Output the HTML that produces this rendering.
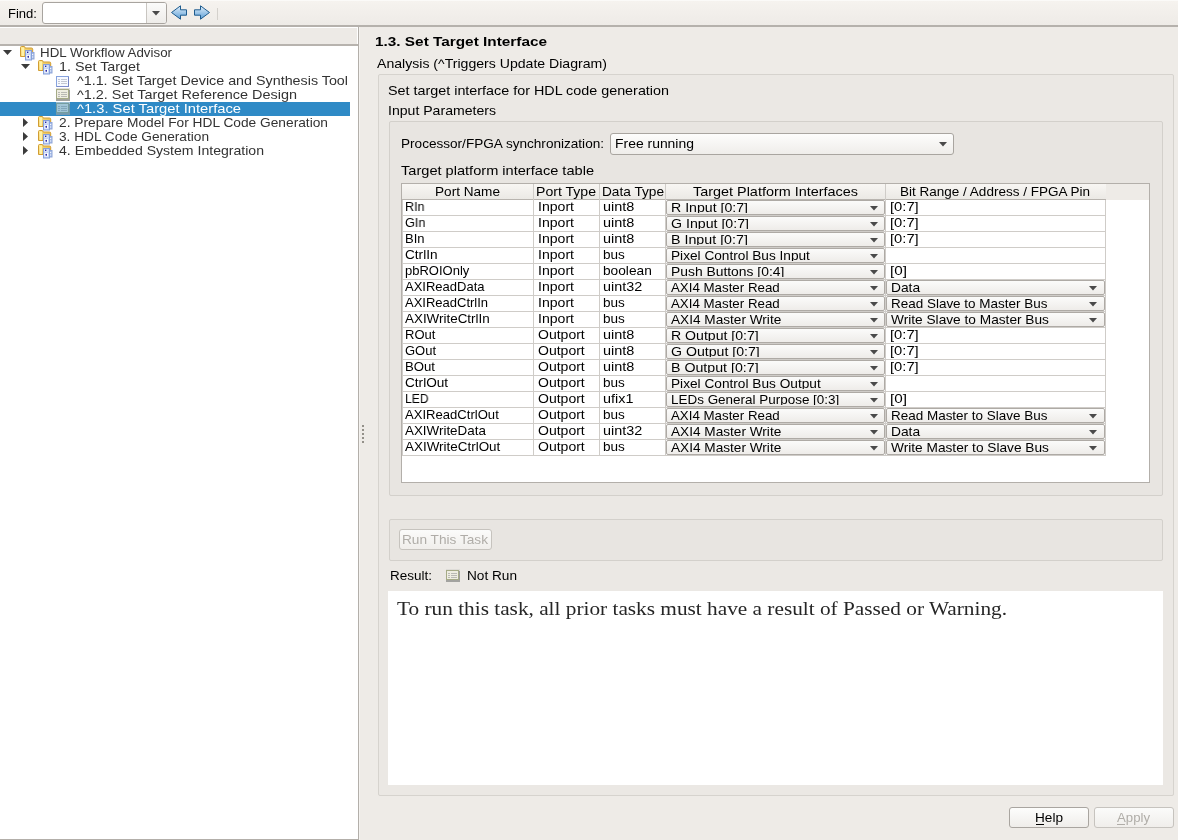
<!DOCTYPE html><html><head><meta charset="utf-8"><title>HDL Workflow Advisor</title>
<style>html,body{margin:0;padding:0;width:1178px;height:840px;overflow:hidden;background:#eeebe7;position:relative}</style></head>
<body><div style="position:absolute;left:0;top:0;width:1178px;height:25px;background:linear-gradient(#f6f3ef,#eeebe7)"></div><div style="position:absolute;left:0;top:0;width:1178px;height:1px;background:#fbfaf8"></div><div style="position:absolute;left:0;top:25px;width:1178px;height:2px;background:#b5b1ac"></div><div style="position:absolute;left:42px;top:2px;width:123px;height:20px;border:1px solid #a8a49f;border-radius:3px;background:#fff"></div><div style="position:absolute;left:146px;top:3px;width:19px;height:20px;border-left:1px solid #c9c6c1;border-radius:0 2px 2px 0;background:linear-gradient(#fbfbfa,#eeece9)"></div><svg style="position:absolute;left:152px;top:11px" width="8" height="5"><path d="M0 0H8L4 4.5Z" fill="#4a4a4a"/></svg><svg style="position:absolute;left:170px;top:5px" width="18" height="16"><defs><linearGradient id="ag" x1="0" y1="0" x2="0" y2="1"><stop offset="0" stop-color="#e3f0fb"/><stop offset="1" stop-color="#5d9fd6"/></linearGradient></defs><path d="M1.5 7.5 L10.5 0.8 V4.8 H16.5 V10.2 H10.5 V14.2 Z" fill="url(#ag)" stroke="#1f5c8e" stroke-width="1" stroke-linejoin="round"/></svg><svg style="position:absolute;left:194px;top:5px" width="18" height="16"><g transform="translate(17,0) scale(-1,1)"><path d="M1.5 7.5 L10.5 0.8 V4.8 H16.5 V10.2 H10.5 V14.2 Z" fill="url(#ag)" stroke="#1f5c8e" stroke-width="1" stroke-linejoin="round"/></g></svg><div style="position:absolute;left:217px;top:8px;width:1px;height:12px;background:#d4d1cc"></div><div style="position:absolute;left:0;top:27px;width:358px;height:812px;background:#fff"></div><div style="position:absolute;left:0;top:28px;width:357px;height:16px;background:#edeae6"></div><div style="position:absolute;left:0;top:44px;width:358px;height:2px;background:#b7b3ae"></div><div style="position:absolute;left:358px;top:27px;width:1px;height:813px;background:#b3afaa"></div><div style="position:absolute;left:0;top:839px;width:358px;height:1px;background:#b3afaa"></div><div style="position:absolute;left:0;top:102px;width:350px;height:14px;background:#2f8ac6"></div><svg style="position:absolute;left:3px;top:50px" width="9" height="5"><path d="M0 0H9L4.5 5Z" fill="#3c3c3c"/></svg><svg style="position:absolute;left:20px;top:46px" width="15" height="15" viewBox="0 0 15 15">
<defs><linearGradient id="fg20_46" x1="0" y1="0" x2="1" y2="1"><stop offset="0" stop-color="#ffe98c"/><stop offset="1" stop-color="#dca73a"/></linearGradient></defs>
<path d="M0.5 1.5 Q0.5 0.5 1.5 0.5 H4 Q5 0.5 5 1.5 V2 H11.5 Q12.7 2 12.7 3.2 V10.5 H0.5 Z" fill="url(#fg20_46)" stroke="#d19d33" stroke-width="1"/>
<rect x="1.5" y="1.5" width="2.5" height="8.5" fill="#fff2a6"/>
<rect x="8.5" y="6.5" width="5.5" height="6.5" fill="#a8bde8" stroke="#90a6d8" stroke-width="1"/>
<rect x="5.5" y="4.5" width="6" height="9.5" fill="#c6d6f4" stroke="#86a0da" stroke-width="1"/>
<rect x="6.5" y="5.5" width="3" height="2" fill="#eef3fc"/>
<rect x="6.5" y="9" width="3.5" height="3.5" fill="#ffffff"/>
<rect x="7" y="5.6" width="1.4" height="1.4" fill="#2424a8"/>
<ellipse cx="8.2" cy="10.8" rx="0.8" ry="1.1" fill="#1c1ca0"/>
<rect x="12" y="8" width="1.2" height="1" fill="#f4f7ff"/><rect x="12" y="10.5" width="1.2" height="1" fill="#f4f7ff"/>
</svg><svg style="position:absolute;left:21px;top:64px" width="9" height="5"><path d="M0 0H9L4.5 5Z" fill="#3c3c3c"/></svg><svg style="position:absolute;left:38px;top:60px" width="15" height="15" viewBox="0 0 15 15">
<defs><linearGradient id="fg38_60" x1="0" y1="0" x2="1" y2="1"><stop offset="0" stop-color="#ffe98c"/><stop offset="1" stop-color="#dca73a"/></linearGradient></defs>
<path d="M0.5 1.5 Q0.5 0.5 1.5 0.5 H4 Q5 0.5 5 1.5 V2 H11.5 Q12.7 2 12.7 3.2 V10.5 H0.5 Z" fill="url(#fg38_60)" stroke="#d19d33" stroke-width="1"/>
<rect x="1.5" y="1.5" width="2.5" height="8.5" fill="#fff2a6"/>
<rect x="8.5" y="6.5" width="5.5" height="6.5" fill="#a8bde8" stroke="#90a6d8" stroke-width="1"/>
<rect x="5.5" y="4.5" width="6" height="9.5" fill="#c6d6f4" stroke="#86a0da" stroke-width="1"/>
<rect x="6.5" y="5.5" width="3" height="2" fill="#eef3fc"/>
<rect x="6.5" y="9" width="3.5" height="3.5" fill="#ffffff"/>
<rect x="7" y="5.6" width="1.4" height="1.4" fill="#2424a8"/>
<ellipse cx="8.2" cy="10.8" rx="0.8" ry="1.1" fill="#1c1ca0"/>
<rect x="12" y="8" width="1.2" height="1" fill="#f4f7ff"/><rect x="12" y="10.5" width="1.2" height="1" fill="#f4f7ff"/>
</svg><svg style="position:absolute;left:56px;top:76px" width="14" height="12" viewBox="0 0 14 12">
<rect x="0.5" y="0.5" width="12" height="10" fill="#f6f9ff" stroke="#86a2de" stroke-width="1"/>
<rect x="12" y="1" width="1" height="10" fill="#7484c4"/><rect x="1" y="10" width="12" height="1" fill="#7d8ccb"/>
<path d="M2 3.5h2M2 5.5h2M2 7.5h2M5 3.5h6M5 5.5h6M5 7.5h6" stroke="#c3c7d2" stroke-width="1"/></svg><svg style="position:absolute;left:56px;top:88px;opacity:1" width="14" height="13" viewBox="0 0 14 13">
<rect x="0" y="0" width="14" height="13" fill="#dedcd8"/>
<rect x="0.5" y="1.5" width="12" height="9" fill="#eeede1" stroke="#a5aa86" stroke-width="1"/>
<rect x="13" y="2" width="1" height="10" fill="#9c9c99"/><rect x="0" y="11" width="14" height="2" fill="#a3a3a0"/>
<path d="M2 4.5h2M2 6.5h2M2 8.5h2M5 4.5h6M5 6.5h6M5 8.5h6" stroke="#b9b9b4" stroke-width="1"/></svg><svg style="position:absolute;left:56px;top:102px;opacity:0.6" width="14" height="13" viewBox="0 0 14 13">
<rect x="0" y="0" width="14" height="13" fill="#dedcd8"/>
<rect x="0.5" y="1.5" width="12" height="9" fill="#eeede1" stroke="#a5aa86" stroke-width="1"/>
<rect x="13" y="2" width="1" height="10" fill="#9c9c99"/><rect x="0" y="11" width="14" height="2" fill="#a3a3a0"/>
<path d="M2 4.5h2M2 6.5h2M2 8.5h2M5 4.5h6M5 6.5h6M5 8.5h6" stroke="#b9b9b4" stroke-width="1"/></svg><svg style="position:absolute;left:23px;top:118px" width="5" height="9"><path d="M0 0V9L5 4.5Z" fill="#3c3c3c"/></svg><svg style="position:absolute;left:38px;top:116px" width="15" height="15" viewBox="0 0 15 15">
<defs><linearGradient id="fg38_116" x1="0" y1="0" x2="1" y2="1"><stop offset="0" stop-color="#ffe98c"/><stop offset="1" stop-color="#dca73a"/></linearGradient></defs>
<path d="M0.5 1.5 Q0.5 0.5 1.5 0.5 H4 Q5 0.5 5 1.5 V2 H11.5 Q12.7 2 12.7 3.2 V10.5 H0.5 Z" fill="url(#fg38_116)" stroke="#d19d33" stroke-width="1"/>
<rect x="1.5" y="1.5" width="2.5" height="8.5" fill="#fff2a6"/>
<rect x="8.5" y="6.5" width="5.5" height="6.5" fill="#a8bde8" stroke="#90a6d8" stroke-width="1"/>
<rect x="5.5" y="4.5" width="6" height="9.5" fill="#c6d6f4" stroke="#86a0da" stroke-width="1"/>
<rect x="6.5" y="5.5" width="3" height="2" fill="#eef3fc"/>
<rect x="6.5" y="9" width="3.5" height="3.5" fill="#ffffff"/>
<rect x="7" y="5.6" width="1.4" height="1.4" fill="#2424a8"/>
<ellipse cx="8.2" cy="10.8" rx="0.8" ry="1.1" fill="#1c1ca0"/>
<rect x="12" y="8" width="1.2" height="1" fill="#f4f7ff"/><rect x="12" y="10.5" width="1.2" height="1" fill="#f4f7ff"/>
</svg><svg style="position:absolute;left:23px;top:132px" width="5" height="9"><path d="M0 0V9L5 4.5Z" fill="#3c3c3c"/></svg><svg style="position:absolute;left:38px;top:130px" width="15" height="15" viewBox="0 0 15 15">
<defs><linearGradient id="fg38_130" x1="0" y1="0" x2="1" y2="1"><stop offset="0" stop-color="#ffe98c"/><stop offset="1" stop-color="#dca73a"/></linearGradient></defs>
<path d="M0.5 1.5 Q0.5 0.5 1.5 0.5 H4 Q5 0.5 5 1.5 V2 H11.5 Q12.7 2 12.7 3.2 V10.5 H0.5 Z" fill="url(#fg38_130)" stroke="#d19d33" stroke-width="1"/>
<rect x="1.5" y="1.5" width="2.5" height="8.5" fill="#fff2a6"/>
<rect x="8.5" y="6.5" width="5.5" height="6.5" fill="#a8bde8" stroke="#90a6d8" stroke-width="1"/>
<rect x="5.5" y="4.5" width="6" height="9.5" fill="#c6d6f4" stroke="#86a0da" stroke-width="1"/>
<rect x="6.5" y="5.5" width="3" height="2" fill="#eef3fc"/>
<rect x="6.5" y="9" width="3.5" height="3.5" fill="#ffffff"/>
<rect x="7" y="5.6" width="1.4" height="1.4" fill="#2424a8"/>
<ellipse cx="8.2" cy="10.8" rx="0.8" ry="1.1" fill="#1c1ca0"/>
<rect x="12" y="8" width="1.2" height="1" fill="#f4f7ff"/><rect x="12" y="10.5" width="1.2" height="1" fill="#f4f7ff"/>
</svg><svg style="position:absolute;left:23px;top:146px" width="5" height="9"><path d="M0 0V9L5 4.5Z" fill="#3c3c3c"/></svg><svg style="position:absolute;left:38px;top:144px" width="15" height="15" viewBox="0 0 15 15">
<defs><linearGradient id="fg38_144" x1="0" y1="0" x2="1" y2="1"><stop offset="0" stop-color="#ffe98c"/><stop offset="1" stop-color="#dca73a"/></linearGradient></defs>
<path d="M0.5 1.5 Q0.5 0.5 1.5 0.5 H4 Q5 0.5 5 1.5 V2 H11.5 Q12.7 2 12.7 3.2 V10.5 H0.5 Z" fill="url(#fg38_144)" stroke="#d19d33" stroke-width="1"/>
<rect x="1.5" y="1.5" width="2.5" height="8.5" fill="#fff2a6"/>
<rect x="8.5" y="6.5" width="5.5" height="6.5" fill="#a8bde8" stroke="#90a6d8" stroke-width="1"/>
<rect x="5.5" y="4.5" width="6" height="9.5" fill="#c6d6f4" stroke="#86a0da" stroke-width="1"/>
<rect x="6.5" y="5.5" width="3" height="2" fill="#eef3fc"/>
<rect x="6.5" y="9" width="3.5" height="3.5" fill="#ffffff"/>
<rect x="7" y="5.6" width="1.4" height="1.4" fill="#2424a8"/>
<ellipse cx="8.2" cy="10.8" rx="0.8" ry="1.1" fill="#1c1ca0"/>
<rect x="12" y="8" width="1.2" height="1" fill="#f4f7ff"/><rect x="12" y="10.5" width="1.2" height="1" fill="#f4f7ff"/>
</svg><div style="position:absolute;left:359px;top:27px;width:819px;height:813px;background:#eeebe7"></div><div style="position:absolute;left:359px;top:27px;width:1px;height:813px;background:#f4f2ef"></div><div style="position:absolute;left:362px;top:425px;width:2px;height:2px;background:#939089"></div><div style="position:absolute;left:362px;top:429px;width:2px;height:2px;background:#939089"></div><div style="position:absolute;left:362px;top:433px;width:2px;height:2px;background:#939089"></div><div style="position:absolute;left:362px;top:437px;width:2px;height:2px;background:#939089"></div><div style="position:absolute;left:362px;top:441px;width:2px;height:2px;background:#939089"></div><div style="position:absolute;left:378px;top:74px;width:794px;height:720px;border:1px solid #d6d3ce;border-radius:2px;background:#ebe8e4"></div><div style="position:absolute;left:389px;top:121px;width:772px;height:373px;border:1px solid #d3d0cb;border-radius:2px;background:#e8e5e1"></div><div style="position:absolute;left:610px;top:133px;width:342px;height:20px;border:1px solid #a9a5a0;border-radius:3px;background:linear-gradient(#fdfdfc,#efedea)"></div><svg style="position:absolute;left:939px;top:142px" width="8" height="5"><path d="M0 0H8L4 4.5Z" fill="#4a4a4a"/></svg><div style="position:absolute;left:401px;top:183px;width:747px;height:298px;border:1px solid #b3afaa;background:#fff"></div><div style="position:absolute;left:402px;top:184px;width:747px;height:16px;background:#eeebe7"></div><div style="position:absolute;left:402px;top:184px;width:131px;height:15px;background:linear-gradient(#f8f6f3,#ebe9e5)"></div><div style="position:absolute;left:534px;top:184px;width:65px;height:15px;background:linear-gradient(#f8f6f3,#ebe9e5)"></div><div style="position:absolute;left:600px;top:184px;width:65px;height:15px;background:linear-gradient(#f8f6f3,#ebe9e5)"></div><div style="position:absolute;left:666px;top:184px;width:219px;height:15px;background:linear-gradient(#f8f6f3,#ebe9e5)"></div><div style="position:absolute;left:886px;top:184px;width:220px;height:15px;background:linear-gradient(#f8f6f3,#ebe9e5)"></div><div style="position:absolute;left:402px;top:199px;width:704px;height:1px;background:#b8b4af"></div><div style="position:absolute;left:533px;top:184px;width:1px;height:272px;background:#cfccc8"></div><div style="position:absolute;left:599px;top:184px;width:1px;height:272px;background:#cfccc8"></div><div style="position:absolute;left:665px;top:184px;width:1px;height:272px;background:#cfccc8"></div><div style="position:absolute;left:885px;top:184px;width:1px;height:272px;background:#cfccc8"></div><div style="position:absolute;left:1105px;top:200px;width:1px;height:256px;background:#cfccc8"></div><div style="position:absolute;left:402px;top:200px;width:1px;height:256px;background:#cfccc8"></div><div style="position:absolute;left:403px;top:215px;width:703px;height:1px;background:#cfccc8"></div><div style="position:absolute;left:666px;top:200px;width:217px;height:13px;border:1px solid #aeaaa5;border-radius:2px;background:linear-gradient(#fbfbfa,#eeece9)"></div><svg style="position:absolute;left:870px;top:206px" width="8" height="5"><path d="M0 0H8L4 4.5Z" fill="#4a4a4a"/></svg><div style="position:absolute;left:403px;top:231px;width:703px;height:1px;background:#cfccc8"></div><div style="position:absolute;left:666px;top:216px;width:217px;height:13px;border:1px solid #aeaaa5;border-radius:2px;background:linear-gradient(#fbfbfa,#eeece9)"></div><svg style="position:absolute;left:870px;top:222px" width="8" height="5"><path d="M0 0H8L4 4.5Z" fill="#4a4a4a"/></svg><div style="position:absolute;left:403px;top:247px;width:703px;height:1px;background:#cfccc8"></div><div style="position:absolute;left:666px;top:232px;width:217px;height:13px;border:1px solid #aeaaa5;border-radius:2px;background:linear-gradient(#fbfbfa,#eeece9)"></div><svg style="position:absolute;left:870px;top:238px" width="8" height="5"><path d="M0 0H8L4 4.5Z" fill="#4a4a4a"/></svg><div style="position:absolute;left:403px;top:263px;width:703px;height:1px;background:#cfccc8"></div><div style="position:absolute;left:666px;top:248px;width:217px;height:13px;border:1px solid #aeaaa5;border-radius:2px;background:linear-gradient(#fbfbfa,#eeece9)"></div><svg style="position:absolute;left:870px;top:254px" width="8" height="5"><path d="M0 0H8L4 4.5Z" fill="#4a4a4a"/></svg><div style="position:absolute;left:403px;top:279px;width:703px;height:1px;background:#cfccc8"></div><div style="position:absolute;left:666px;top:264px;width:217px;height:13px;border:1px solid #aeaaa5;border-radius:2px;background:linear-gradient(#fbfbfa,#eeece9)"></div><svg style="position:absolute;left:870px;top:270px" width="8" height="5"><path d="M0 0H8L4 4.5Z" fill="#4a4a4a"/></svg><div style="position:absolute;left:403px;top:295px;width:703px;height:1px;background:#cfccc8"></div><div style="position:absolute;left:666px;top:280px;width:217px;height:13px;border:1px solid #aeaaa5;border-radius:2px;background:linear-gradient(#fbfbfa,#eeece9)"></div><svg style="position:absolute;left:870px;top:286px" width="8" height="5"><path d="M0 0H8L4 4.5Z" fill="#4a4a4a"/></svg><div style="position:absolute;left:886px;top:280px;width:217px;height:13px;border:1px solid #aeaaa5;border-radius:2px;background:linear-gradient(#fbfbfa,#eeece9)"></div><svg style="position:absolute;left:1089px;top:286px" width="8" height="5"><path d="M0 0H8L4 4.5Z" fill="#4a4a4a"/></svg><div style="position:absolute;left:403px;top:311px;width:703px;height:1px;background:#cfccc8"></div><div style="position:absolute;left:666px;top:296px;width:217px;height:13px;border:1px solid #aeaaa5;border-radius:2px;background:linear-gradient(#fbfbfa,#eeece9)"></div><svg style="position:absolute;left:870px;top:302px" width="8" height="5"><path d="M0 0H8L4 4.5Z" fill="#4a4a4a"/></svg><div style="position:absolute;left:886px;top:296px;width:217px;height:13px;border:1px solid #aeaaa5;border-radius:2px;background:linear-gradient(#fbfbfa,#eeece9)"></div><svg style="position:absolute;left:1089px;top:302px" width="8" height="5"><path d="M0 0H8L4 4.5Z" fill="#4a4a4a"/></svg><div style="position:absolute;left:403px;top:327px;width:703px;height:1px;background:#cfccc8"></div><div style="position:absolute;left:666px;top:312px;width:217px;height:13px;border:1px solid #aeaaa5;border-radius:2px;background:linear-gradient(#fbfbfa,#eeece9)"></div><svg style="position:absolute;left:870px;top:318px" width="8" height="5"><path d="M0 0H8L4 4.5Z" fill="#4a4a4a"/></svg><div style="position:absolute;left:886px;top:312px;width:217px;height:13px;border:1px solid #aeaaa5;border-radius:2px;background:linear-gradient(#fbfbfa,#eeece9)"></div><svg style="position:absolute;left:1089px;top:318px" width="8" height="5"><path d="M0 0H8L4 4.5Z" fill="#4a4a4a"/></svg><div style="position:absolute;left:403px;top:343px;width:703px;height:1px;background:#cfccc8"></div><div style="position:absolute;left:666px;top:328px;width:217px;height:13px;border:1px solid #aeaaa5;border-radius:2px;background:linear-gradient(#fbfbfa,#eeece9)"></div><svg style="position:absolute;left:870px;top:334px" width="8" height="5"><path d="M0 0H8L4 4.5Z" fill="#4a4a4a"/></svg><div style="position:absolute;left:403px;top:359px;width:703px;height:1px;background:#cfccc8"></div><div style="position:absolute;left:666px;top:344px;width:217px;height:13px;border:1px solid #aeaaa5;border-radius:2px;background:linear-gradient(#fbfbfa,#eeece9)"></div><svg style="position:absolute;left:870px;top:350px" width="8" height="5"><path d="M0 0H8L4 4.5Z" fill="#4a4a4a"/></svg><div style="position:absolute;left:403px;top:375px;width:703px;height:1px;background:#cfccc8"></div><div style="position:absolute;left:666px;top:360px;width:217px;height:13px;border:1px solid #aeaaa5;border-radius:2px;background:linear-gradient(#fbfbfa,#eeece9)"></div><svg style="position:absolute;left:870px;top:366px" width="8" height="5"><path d="M0 0H8L4 4.5Z" fill="#4a4a4a"/></svg><div style="position:absolute;left:403px;top:391px;width:703px;height:1px;background:#cfccc8"></div><div style="position:absolute;left:666px;top:376px;width:217px;height:13px;border:1px solid #aeaaa5;border-radius:2px;background:linear-gradient(#fbfbfa,#eeece9)"></div><svg style="position:absolute;left:870px;top:382px" width="8" height="5"><path d="M0 0H8L4 4.5Z" fill="#4a4a4a"/></svg><div style="position:absolute;left:403px;top:407px;width:703px;height:1px;background:#cfccc8"></div><div style="position:absolute;left:666px;top:392px;width:217px;height:13px;border:1px solid #aeaaa5;border-radius:2px;background:linear-gradient(#fbfbfa,#eeece9)"></div><svg style="position:absolute;left:870px;top:398px" width="8" height="5"><path d="M0 0H8L4 4.5Z" fill="#4a4a4a"/></svg><div style="position:absolute;left:403px;top:423px;width:703px;height:1px;background:#cfccc8"></div><div style="position:absolute;left:666px;top:408px;width:217px;height:13px;border:1px solid #aeaaa5;border-radius:2px;background:linear-gradient(#fbfbfa,#eeece9)"></div><svg style="position:absolute;left:870px;top:414px" width="8" height="5"><path d="M0 0H8L4 4.5Z" fill="#4a4a4a"/></svg><div style="position:absolute;left:886px;top:408px;width:217px;height:13px;border:1px solid #aeaaa5;border-radius:2px;background:linear-gradient(#fbfbfa,#eeece9)"></div><svg style="position:absolute;left:1089px;top:414px" width="8" height="5"><path d="M0 0H8L4 4.5Z" fill="#4a4a4a"/></svg><div style="position:absolute;left:403px;top:439px;width:703px;height:1px;background:#cfccc8"></div><div style="position:absolute;left:666px;top:424px;width:217px;height:13px;border:1px solid #aeaaa5;border-radius:2px;background:linear-gradient(#fbfbfa,#eeece9)"></div><svg style="position:absolute;left:870px;top:430px" width="8" height="5"><path d="M0 0H8L4 4.5Z" fill="#4a4a4a"/></svg><div style="position:absolute;left:886px;top:424px;width:217px;height:13px;border:1px solid #aeaaa5;border-radius:2px;background:linear-gradient(#fbfbfa,#eeece9)"></div><svg style="position:absolute;left:1089px;top:430px" width="8" height="5"><path d="M0 0H8L4 4.5Z" fill="#4a4a4a"/></svg><div style="position:absolute;left:403px;top:455px;width:703px;height:1px;background:#cfccc8"></div><div style="position:absolute;left:666px;top:440px;width:217px;height:13px;border:1px solid #aeaaa5;border-radius:2px;background:linear-gradient(#fbfbfa,#eeece9)"></div><svg style="position:absolute;left:870px;top:446px" width="8" height="5"><path d="M0 0H8L4 4.5Z" fill="#4a4a4a"/></svg><div style="position:absolute;left:886px;top:440px;width:217px;height:13px;border:1px solid #aeaaa5;border-radius:2px;background:linear-gradient(#fbfbfa,#eeece9)"></div><svg style="position:absolute;left:1089px;top:446px" width="8" height="5"><path d="M0 0H8L4 4.5Z" fill="#4a4a4a"/></svg><div style="position:absolute;left:389px;top:519px;width:772px;height:40px;border:1px solid #d3d0cb;border-radius:2px;background:#e8e5e1"></div><div style="position:absolute;left:399px;top:529px;width:91px;height:19px;border:1px solid #c6c3be;border-radius:3px;background:linear-gradient(#fbfbfa,#f0eeeb)"></div><svg style="position:absolute;left:446px;top:569px;opacity:1" width="14" height="13" viewBox="0 0 14 13">
<rect x="0" y="0" width="14" height="13" fill="#dedcd8"/>
<rect x="0.5" y="1.5" width="12" height="9" fill="#eeede1" stroke="#a5aa86" stroke-width="1"/>
<rect x="13" y="2" width="1" height="10" fill="#9c9c99"/><rect x="0" y="11" width="14" height="2" fill="#a3a3a0"/>
<path d="M2 4.5h2M2 6.5h2M2 8.5h2M5 4.5h6M5 6.5h6M5 8.5h6" stroke="#b9b9b4" stroke-width="1"/></svg><div style="position:absolute;left:388px;top:591px;width:775px;height:194px;background:#fff"></div><div style="position:absolute;left:1009px;top:807px;width:78px;height:19px;border:1px solid #a9a5a0;border-radius:3px;background:linear-gradient(#fdfdfc,#efedea)"></div><div style="position:absolute;left:1036px;top:824px;width:8px;height:1px;background:#000"></div><div style="position:absolute;left:1094px;top:807px;width:78px;height:19px;border:1px solid #c6c3be;border-radius:3px;background:linear-gradient(#fbfbfa,#f0eeeb)"></div><div style="position:absolute;left:1117px;top:824px;width:8px;height:1px;background:#b0ada8"></div><div style="position:absolute;left:8px;top:4px;font:13px/20px 'Liberation Sans', sans-serif;color:#000;white-space:nowrap;will-change:transform;transform:scaleX(1.0032);transform-origin:0 0">Find:</div><div style="position:absolute;left:40px;top:43px;font:13px/20px 'Liberation Sans', sans-serif;color:#333333;white-space:nowrap;will-change:transform;transform:scaleX(1.0265);transform-origin:0 0">HDL Workflow Advisor</div><div style="position:absolute;left:59px;top:57px;font:13px/20px 'Liberation Sans', sans-serif;color:#333333;white-space:nowrap;will-change:transform;transform:scaleX(1.1023);transform-origin:0 0">1. Set Target</div><div style="position:absolute;left:77px;top:71px;font:13px/20px 'Liberation Sans', sans-serif;color:#333333;white-space:nowrap;will-change:transform;transform:scaleX(1.1004);transform-origin:0 0">^1.1. Set Target Device and Synthesis Tool</div><div style="position:absolute;left:77px;top:85px;font:13px/20px 'Liberation Sans', sans-serif;color:#333333;white-space:nowrap;will-change:transform;transform:scaleX(1.1106);transform-origin:0 0">^1.2. Set Target Reference Design</div><div style="position:absolute;left:77px;top:99px;font:13px/20px 'Liberation Sans', sans-serif;color:#ffffff;white-space:nowrap;will-change:transform;transform:scaleX(1.1340);transform-origin:0 0">^1.3. Set Target Interface</div><div style="position:absolute;left:59px;top:113px;font:13px/20px 'Liberation Sans', sans-serif;color:#333333;white-space:nowrap;will-change:transform;transform:scaleX(1.0566);transform-origin:0 0">2. Prepare Model For HDL Code Generation</div><div style="position:absolute;left:59px;top:127px;font:13px/20px 'Liberation Sans', sans-serif;color:#333333;white-space:nowrap;will-change:transform;transform:scaleX(1.0518);transform-origin:0 0">3. HDL Code Generation</div><div style="position:absolute;left:59px;top:141px;font:13px/20px 'Liberation Sans', sans-serif;color:#333333;white-space:nowrap;will-change:transform;transform:scaleX(1.0827);transform-origin:0 0">4. Embedded System Integration</div><div style="position:absolute;left:375px;top:32px;font:bold 13px/20px 'Liberation Sans', sans-serif;color:#000;white-space:nowrap;will-change:transform;transform:scaleX(1.1804);transform-origin:0 0">1.3. Set Target Interface</div><div style="position:absolute;left:377px;top:54px;font:13px/20px 'Liberation Sans', sans-serif;color:#000;white-space:nowrap;will-change:transform;transform:scaleX(1.0836);transform-origin:0 0">Analysis (^Triggers Update Diagram)</div><div style="position:absolute;left:388px;top:81px;font:13px/20px 'Liberation Sans', sans-serif;color:#000;white-space:nowrap;will-change:transform;transform:scaleX(1.1036);transform-origin:0 0">Set target interface for HDL code generation</div><div style="position:absolute;left:388px;top:101px;font:13px/20px 'Liberation Sans', sans-serif;color:#000;white-space:nowrap;will-change:transform;transform:scaleX(1.0830);transform-origin:0 0">Input Parameters</div><div style="position:absolute;left:401px;top:134px;font:13px/20px 'Liberation Sans', sans-serif;color:#000;white-space:nowrap;will-change:transform;transform:scaleX(1.0445);transform-origin:0 0">Processor/FPGA synchronization:</div><div style="position:absolute;left:615px;top:134px;font:13px/20px 'Liberation Sans', sans-serif;color:#000;white-space:nowrap;will-change:transform;transform:scaleX(1.0711);transform-origin:0 0">Free running</div><div style="position:absolute;left:401px;top:161px;font:13px/20px 'Liberation Sans', sans-serif;color:#000;white-space:nowrap;will-change:transform;transform:scaleX(1.1222);transform-origin:0 0">Target platform interface table</div><div style="position:absolute;left:435px;top:182px;font:13px/20px 'Liberation Sans', sans-serif;color:#000;white-space:nowrap;will-change:transform;transform:scaleX(1.0460);transform-origin:0 0">Port Name</div><div style="position:absolute;left:536px;top:182px;font:13px/20px 'Liberation Sans', sans-serif;color:#000;white-space:nowrap;will-change:transform;transform:scaleX(1.0829);transform-origin:0 0">Port Type</div><div style="position:absolute;left:602px;top:182px;font:13px/20px 'Liberation Sans', sans-serif;color:#000;white-space:nowrap;will-change:transform;transform:scaleX(1.0503);transform-origin:0 0">Data Type</div><div style="position:absolute;left:693px;top:182px;font:13px/20px 'Liberation Sans', sans-serif;color:#000;white-space:nowrap;will-change:transform;transform:scaleX(1.1085);transform-origin:0 0">Target Platform Interfaces</div><div style="position:absolute;left:900px;top:182px;font:13px/20px 'Liberation Sans', sans-serif;color:#000;white-space:nowrap;will-change:transform;transform:scaleX(1.0393);transform-origin:0 0">Bit Range / Address / FPGA Pin</div><div style="position:absolute;left:405px;top:197px;font:13px/20px 'Liberation Sans', sans-serif;color:#000;white-space:nowrap;will-change:transform;transform:scaleX(0.9628);transform-origin:0 0">RIn</div><div style="position:absolute;left:538px;top:197px;font:13px/20px 'Liberation Sans', sans-serif;color:#000;white-space:nowrap;will-change:transform;transform:scaleX(1.0839);transform-origin:0 0">Inport</div><div style="position:absolute;left:603px;top:197px;font:13px/20px 'Liberation Sans', sans-serif;color:#000;white-space:nowrap;will-change:transform;transform:scaleX(1.1133);transform-origin:0 0">uint8</div><div style="position:absolute;left:671px;top:198px;font:13px/20px 'Liberation Sans', sans-serif;color:#000;white-space:nowrap;will-change:transform;transform:scaleX(1.0868);transform-origin:0 0;clip-path:inset(0 0 5px 0)">R Input [0:7]</div><div style="position:absolute;left:890px;top:197px;font:13px/20px 'Liberation Sans', sans-serif;color:#000;white-space:nowrap;will-change:transform;transform:scaleX(1.1336);transform-origin:0 0">[0:7]</div><div style="position:absolute;left:405px;top:213px;font:13px/20px 'Liberation Sans', sans-serif;color:#000;white-space:nowrap;will-change:transform;transform:scaleX(0.9749);transform-origin:0 0">GIn</div><div style="position:absolute;left:538px;top:213px;font:13px/20px 'Liberation Sans', sans-serif;color:#000;white-space:nowrap;will-change:transform;transform:scaleX(1.0839);transform-origin:0 0">Inport</div><div style="position:absolute;left:603px;top:213px;font:13px/20px 'Liberation Sans', sans-serif;color:#000;white-space:nowrap;will-change:transform;transform:scaleX(1.1133);transform-origin:0 0">uint8</div><div style="position:absolute;left:671px;top:214px;font:13px/20px 'Liberation Sans', sans-serif;color:#000;white-space:nowrap;will-change:transform;transform:scaleX(1.0895);transform-origin:0 0;clip-path:inset(0 0 5px 0)">G Input [0:7]</div><div style="position:absolute;left:890px;top:213px;font:13px/20px 'Liberation Sans', sans-serif;color:#000;white-space:nowrap;will-change:transform;transform:scaleX(1.1336);transform-origin:0 0">[0:7]</div><div style="position:absolute;left:405px;top:229px;font:13px/20px 'Liberation Sans', sans-serif;color:#000;white-space:nowrap;will-change:transform;transform:scaleX(0.9929);transform-origin:0 0">BIn</div><div style="position:absolute;left:538px;top:229px;font:13px/20px 'Liberation Sans', sans-serif;color:#000;white-space:nowrap;will-change:transform;transform:scaleX(1.0839);transform-origin:0 0">Inport</div><div style="position:absolute;left:603px;top:229px;font:13px/20px 'Liberation Sans', sans-serif;color:#000;white-space:nowrap;will-change:transform;transform:scaleX(1.1133);transform-origin:0 0">uint8</div><div style="position:absolute;left:671px;top:230px;font:13px/20px 'Liberation Sans', sans-serif;color:#000;white-space:nowrap;will-change:transform;transform:scaleX(1.0964);transform-origin:0 0;clip-path:inset(0 0 5px 0)">B Input [0:7]</div><div style="position:absolute;left:890px;top:229px;font:13px/20px 'Liberation Sans', sans-serif;color:#000;white-space:nowrap;will-change:transform;transform:scaleX(1.1336);transform-origin:0 0">[0:7]</div><div style="position:absolute;left:405px;top:245px;font:13px/20px 'Liberation Sans', sans-serif;color:#000;white-space:nowrap;will-change:transform;transform:scaleX(1.0462);transform-origin:0 0">CtrlIn</div><div style="position:absolute;left:538px;top:245px;font:13px/20px 'Liberation Sans', sans-serif;color:#000;white-space:nowrap;will-change:transform;transform:scaleX(1.0839);transform-origin:0 0">Inport</div><div style="position:absolute;left:603px;top:245px;font:13px/20px 'Liberation Sans', sans-serif;color:#000;white-space:nowrap;will-change:transform;transform:scaleX(1.0412);transform-origin:0 0">bus</div><div style="position:absolute;left:671px;top:246px;font:13px/20px 'Liberation Sans', sans-serif;color:#000;white-space:nowrap;will-change:transform;transform:scaleX(1.0505);transform-origin:0 0;clip-path:inset(0 0 5px 0)">Pixel Control Bus Input</div><div style="position:absolute;left:890px;top:245px;font:13px/20px 'Liberation Sans', sans-serif;color:#000;white-space:nowrap;will-change:transform"></div><div style="position:absolute;left:405px;top:261px;font:13px/20px 'Liberation Sans', sans-serif;color:#000;white-space:nowrap;will-change:transform;transform:scaleX(0.9958);transform-origin:0 0">pbROIOnly</div><div style="position:absolute;left:538px;top:261px;font:13px/20px 'Liberation Sans', sans-serif;color:#000;white-space:nowrap;will-change:transform;transform:scaleX(1.0839);transform-origin:0 0">Inport</div><div style="position:absolute;left:603px;top:261px;font:13px/20px 'Liberation Sans', sans-serif;color:#000;white-space:nowrap;will-change:transform;transform:scaleX(1.0539);transform-origin:0 0">boolean</div><div style="position:absolute;left:671px;top:262px;font:13px/20px 'Liberation Sans', sans-serif;color:#000;white-space:nowrap;will-change:transform;transform:scaleX(1.0666);transform-origin:0 0;clip-path:inset(0 0 5px 0)">Push Buttons [0:4]</div><div style="position:absolute;left:890px;top:261px;font:13px/20px 'Liberation Sans', sans-serif;color:#000;white-space:nowrap;will-change:transform;transform:scaleX(1.1748);transform-origin:0 0">[0]</div><div style="position:absolute;left:405px;top:277px;font:13px/20px 'Liberation Sans', sans-serif;color:#000;white-space:nowrap;will-change:transform;transform:scaleX(0.9978);transform-origin:0 0">AXIReadData</div><div style="position:absolute;left:538px;top:277px;font:13px/20px 'Liberation Sans', sans-serif;color:#000;white-space:nowrap;will-change:transform;transform:scaleX(1.0839);transform-origin:0 0">Inport</div><div style="position:absolute;left:603px;top:277px;font:13px/20px 'Liberation Sans', sans-serif;color:#000;white-space:nowrap;will-change:transform;transform:scaleX(1.1056);transform-origin:0 0">uint32</div><div style="position:absolute;left:671px;top:278px;font:13px/20px 'Liberation Sans', sans-serif;color:#000;white-space:nowrap;will-change:transform;transform:scaleX(1.0233);transform-origin:0 0;clip-path:inset(0 0 5px 0)">AXI4 Master Read</div><div style="position:absolute;left:891px;top:278px;font:13px/20px 'Liberation Sans', sans-serif;color:#000;white-space:nowrap;will-change:transform;transform:scaleX(1.0605);transform-origin:0 0;clip-path:inset(0 0 5px 0)">Data</div><div style="position:absolute;left:405px;top:293px;font:13px/20px 'Liberation Sans', sans-serif;color:#000;white-space:nowrap;will-change:transform">AXIReadCtrlIn</div><div style="position:absolute;left:538px;top:293px;font:13px/20px 'Liberation Sans', sans-serif;color:#000;white-space:nowrap;will-change:transform;transform:scaleX(1.0839);transform-origin:0 0">Inport</div><div style="position:absolute;left:603px;top:293px;font:13px/20px 'Liberation Sans', sans-serif;color:#000;white-space:nowrap;will-change:transform;transform:scaleX(1.0412);transform-origin:0 0">bus</div><div style="position:absolute;left:671px;top:294px;font:13px/20px 'Liberation Sans', sans-serif;color:#000;white-space:nowrap;will-change:transform;transform:scaleX(1.0233);transform-origin:0 0;clip-path:inset(0 0 5px 0)">AXI4 Master Read</div><div style="position:absolute;left:891px;top:294px;font:13px/20px 'Liberation Sans', sans-serif;color:#000;white-space:nowrap;will-change:transform;transform:scaleX(1.0357);transform-origin:0 0;clip-path:inset(0 0 5px 0)">Read Slave to Master Bus</div><div style="position:absolute;left:405px;top:309px;font:13px/20px 'Liberation Sans', sans-serif;color:#000;white-space:nowrap;will-change:transform;transform:scaleX(1.0315);transform-origin:0 0">AXIWriteCtrlIn</div><div style="position:absolute;left:538px;top:309px;font:13px/20px 'Liberation Sans', sans-serif;color:#000;white-space:nowrap;will-change:transform;transform:scaleX(1.0839);transform-origin:0 0">Inport</div><div style="position:absolute;left:603px;top:309px;font:13px/20px 'Liberation Sans', sans-serif;color:#000;white-space:nowrap;will-change:transform;transform:scaleX(1.0412);transform-origin:0 0">bus</div><div style="position:absolute;left:671px;top:310px;font:13px/20px 'Liberation Sans', sans-serif;color:#000;white-space:nowrap;will-change:transform;transform:scaleX(1.0477);transform-origin:0 0;clip-path:inset(0 0 5px 0)">AXI4 Master Write</div><div style="position:absolute;left:891px;top:310px;font:13px/20px 'Liberation Sans', sans-serif;color:#000;white-space:nowrap;will-change:transform;transform:scaleX(1.0528);transform-origin:0 0;clip-path:inset(0 0 5px 0)">Write Slave to Master Bus</div><div style="position:absolute;left:405px;top:325px;font:13px/20px 'Liberation Sans', sans-serif;color:#000;white-space:nowrap;will-change:transform;transform:scaleX(0.9918);transform-origin:0 0">ROut</div><div style="position:absolute;left:538px;top:325px;font:13px/20px 'Liberation Sans', sans-serif;color:#000;white-space:nowrap;will-change:transform;transform:scaleX(1.0780);transform-origin:0 0">Outport</div><div style="position:absolute;left:603px;top:325px;font:13px/20px 'Liberation Sans', sans-serif;color:#000;white-space:nowrap;will-change:transform;transform:scaleX(1.1133);transform-origin:0 0">uint8</div><div style="position:absolute;left:671px;top:326px;font:13px/20px 'Liberation Sans', sans-serif;color:#000;white-space:nowrap;will-change:transform;transform:scaleX(1.0844);transform-origin:0 0;clip-path:inset(0 0 5px 0)">R Output [0:7]</div><div style="position:absolute;left:890px;top:325px;font:13px/20px 'Liberation Sans', sans-serif;color:#000;white-space:nowrap;will-change:transform;transform:scaleX(1.1336);transform-origin:0 0">[0:7]</div><div style="position:absolute;left:405px;top:341px;font:13px/20px 'Liberation Sans', sans-serif;color:#000;white-space:nowrap;will-change:transform">GOut</div><div style="position:absolute;left:538px;top:341px;font:13px/20px 'Liberation Sans', sans-serif;color:#000;white-space:nowrap;will-change:transform;transform:scaleX(1.0780);transform-origin:0 0">Outport</div><div style="position:absolute;left:603px;top:341px;font:13px/20px 'Liberation Sans', sans-serif;color:#000;white-space:nowrap;will-change:transform;transform:scaleX(1.1133);transform-origin:0 0">uint8</div><div style="position:absolute;left:671px;top:342px;font:13px/20px 'Liberation Sans', sans-serif;color:#000;white-space:nowrap;will-change:transform;transform:scaleX(1.0868);transform-origin:0 0;clip-path:inset(0 0 5px 0)">G Output [0:7]</div><div style="position:absolute;left:890px;top:341px;font:13px/20px 'Liberation Sans', sans-serif;color:#000;white-space:nowrap;will-change:transform;transform:scaleX(1.1336);transform-origin:0 0">[0:7]</div><div style="position:absolute;left:405px;top:357px;font:13px/20px 'Liberation Sans', sans-serif;color:#000;white-space:nowrap;will-change:transform;transform:scaleX(1.0123);transform-origin:0 0">BOut</div><div style="position:absolute;left:538px;top:357px;font:13px/20px 'Liberation Sans', sans-serif;color:#000;white-space:nowrap;will-change:transform;transform:scaleX(1.0780);transform-origin:0 0">Outport</div><div style="position:absolute;left:603px;top:357px;font:13px/20px 'Liberation Sans', sans-serif;color:#000;white-space:nowrap;will-change:transform;transform:scaleX(1.1133);transform-origin:0 0">uint8</div><div style="position:absolute;left:671px;top:358px;font:13px/20px 'Liberation Sans', sans-serif;color:#000;white-space:nowrap;will-change:transform;transform:scaleX(1.0927);transform-origin:0 0;clip-path:inset(0 0 5px 0)">B Output [0:7]</div><div style="position:absolute;left:890px;top:357px;font:13px/20px 'Liberation Sans', sans-serif;color:#000;white-space:nowrap;will-change:transform;transform:scaleX(1.1336);transform-origin:0 0">[0:7]</div><div style="position:absolute;left:405px;top:373px;font:13px/20px 'Liberation Sans', sans-serif;color:#000;white-space:nowrap;will-change:transform;transform:scaleX(1.0470);transform-origin:0 0">CtrlOut</div><div style="position:absolute;left:538px;top:373px;font:13px/20px 'Liberation Sans', sans-serif;color:#000;white-space:nowrap;will-change:transform;transform:scaleX(1.0780);transform-origin:0 0">Outport</div><div style="position:absolute;left:603px;top:373px;font:13px/20px 'Liberation Sans', sans-serif;color:#000;white-space:nowrap;will-change:transform;transform:scaleX(1.0412);transform-origin:0 0">bus</div><div style="position:absolute;left:671px;top:374px;font:13px/20px 'Liberation Sans', sans-serif;color:#000;white-space:nowrap;will-change:transform;transform:scaleX(1.0516);transform-origin:0 0;clip-path:inset(0 0 5px 0)">Pixel Control Bus Output</div><div style="position:absolute;left:890px;top:373px;font:13px/20px 'Liberation Sans', sans-serif;color:#000;white-space:nowrap;will-change:transform"></div><div style="position:absolute;left:405px;top:389px;font:13px/20px 'Liberation Sans', sans-serif;color:#000;white-space:nowrap;will-change:transform;transform:scaleX(0.9293);transform-origin:0 0">LED</div><div style="position:absolute;left:538px;top:389px;font:13px/20px 'Liberation Sans', sans-serif;color:#000;white-space:nowrap;will-change:transform;transform:scaleX(1.0780);transform-origin:0 0">Outport</div><div style="position:absolute;left:603px;top:389px;font:13px/20px 'Liberation Sans', sans-serif;color:#000;white-space:nowrap;will-change:transform;transform:scaleX(1.1067);transform-origin:0 0">ufix1</div><div style="position:absolute;left:671px;top:390px;font:13px/20px 'Liberation Sans', sans-serif;color:#000;white-space:nowrap;will-change:transform;transform:scaleX(1.0351);transform-origin:0 0;clip-path:inset(0 0 5px 0)">LEDs General Purpose [0:3]</div><div style="position:absolute;left:890px;top:389px;font:13px/20px 'Liberation Sans', sans-serif;color:#000;white-space:nowrap;will-change:transform;transform:scaleX(1.1748);transform-origin:0 0">[0]</div><div style="position:absolute;left:405px;top:405px;font:13px/20px 'Liberation Sans', sans-serif;color:#000;white-space:nowrap;will-change:transform;transform:scaleX(1.0062);transform-origin:0 0">AXIReadCtrlOut</div><div style="position:absolute;left:538px;top:405px;font:13px/20px 'Liberation Sans', sans-serif;color:#000;white-space:nowrap;will-change:transform;transform:scaleX(1.0780);transform-origin:0 0">Outport</div><div style="position:absolute;left:603px;top:405px;font:13px/20px 'Liberation Sans', sans-serif;color:#000;white-space:nowrap;will-change:transform;transform:scaleX(1.0412);transform-origin:0 0">bus</div><div style="position:absolute;left:671px;top:406px;font:13px/20px 'Liberation Sans', sans-serif;color:#000;white-space:nowrap;will-change:transform;transform:scaleX(1.0233);transform-origin:0 0;clip-path:inset(0 0 5px 0)">AXI4 Master Read</div><div style="position:absolute;left:891px;top:406px;font:13px/20px 'Liberation Sans', sans-serif;color:#000;white-space:nowrap;will-change:transform;transform:scaleX(1.0357);transform-origin:0 0;clip-path:inset(0 0 5px 0)">Read Master to Slave Bus</div><div style="position:absolute;left:405px;top:421px;font:13px/20px 'Liberation Sans', sans-serif;color:#000;white-space:nowrap;will-change:transform;transform:scaleX(1.0298);transform-origin:0 0">AXIWriteData</div><div style="position:absolute;left:538px;top:421px;font:13px/20px 'Liberation Sans', sans-serif;color:#000;white-space:nowrap;will-change:transform;transform:scaleX(1.0780);transform-origin:0 0">Outport</div><div style="position:absolute;left:603px;top:421px;font:13px/20px 'Liberation Sans', sans-serif;color:#000;white-space:nowrap;will-change:transform;transform:scaleX(1.1056);transform-origin:0 0">uint32</div><div style="position:absolute;left:671px;top:422px;font:13px/20px 'Liberation Sans', sans-serif;color:#000;white-space:nowrap;will-change:transform;transform:scaleX(1.0477);transform-origin:0 0;clip-path:inset(0 0 5px 0)">AXI4 Master Write</div><div style="position:absolute;left:891px;top:422px;font:13px/20px 'Liberation Sans', sans-serif;color:#000;white-space:nowrap;will-change:transform;transform:scaleX(1.0605);transform-origin:0 0;clip-path:inset(0 0 5px 0)">Data</div><div style="position:absolute;left:405px;top:437px;font:13px/20px 'Liberation Sans', sans-serif;color:#000;white-space:nowrap;will-change:transform;transform:scaleX(1.0335);transform-origin:0 0">AXIWriteCtrlOut</div><div style="position:absolute;left:538px;top:437px;font:13px/20px 'Liberation Sans', sans-serif;color:#000;white-space:nowrap;will-change:transform;transform:scaleX(1.0780);transform-origin:0 0">Outport</div><div style="position:absolute;left:603px;top:437px;font:13px/20px 'Liberation Sans', sans-serif;color:#000;white-space:nowrap;will-change:transform;transform:scaleX(1.0412);transform-origin:0 0">bus</div><div style="position:absolute;left:671px;top:438px;font:13px/20px 'Liberation Sans', sans-serif;color:#000;white-space:nowrap;will-change:transform;transform:scaleX(1.0477);transform-origin:0 0;clip-path:inset(0 0 5px 0)">AXI4 Master Write</div><div style="position:absolute;left:891px;top:438px;font:13px/20px 'Liberation Sans', sans-serif;color:#000;white-space:nowrap;will-change:transform;transform:scaleX(1.0528);transform-origin:0 0;clip-path:inset(0 0 5px 0)">Write Master to Slave Bus</div><div style="position:absolute;left:402px;top:530px;font:13px/20px 'Liberation Sans', sans-serif;color:#b0ada8;white-space:nowrap;will-change:transform;transform:scaleX(1.0500);transform-origin:0 0">Run This Task</div><div style="position:absolute;left:390px;top:566px;font:12px/20px 'Liberation Sans', sans-serif;color:#000;white-space:nowrap;will-change:transform;transform:scaleX(1.1242);transform-origin:0 0">Result:</div><div style="position:absolute;left:467px;top:566px;font:12px/20px 'Liberation Sans', sans-serif;color:#000;white-space:nowrap;will-change:transform;transform:scaleX(1.1356);transform-origin:0 0">Not Run</div><div style="position:absolute;left:397px;top:599px;font:18px/20px 'Liberation Serif', serif;color:#262626;white-space:nowrap;will-change:transform;transform:scaleX(1.1825);transform-origin:0 0">To run this task, all prior tasks must have a result of Passed or Warning.</div><div style="position:absolute;left:1035px;top:808px;font:13px/20px 'Liberation Sans', sans-serif;color:#000;white-space:nowrap;will-change:transform;transform:scaleX(1.0467);transform-origin:0 0">Help</div><div style="position:absolute;left:1117px;top:808px;font:13px/20px 'Liberation Sans', sans-serif;color:#b0ada8;white-space:nowrap;will-change:transform;transform:scaleX(1.0144);transform-origin:0 0">Apply</div></body></html>
